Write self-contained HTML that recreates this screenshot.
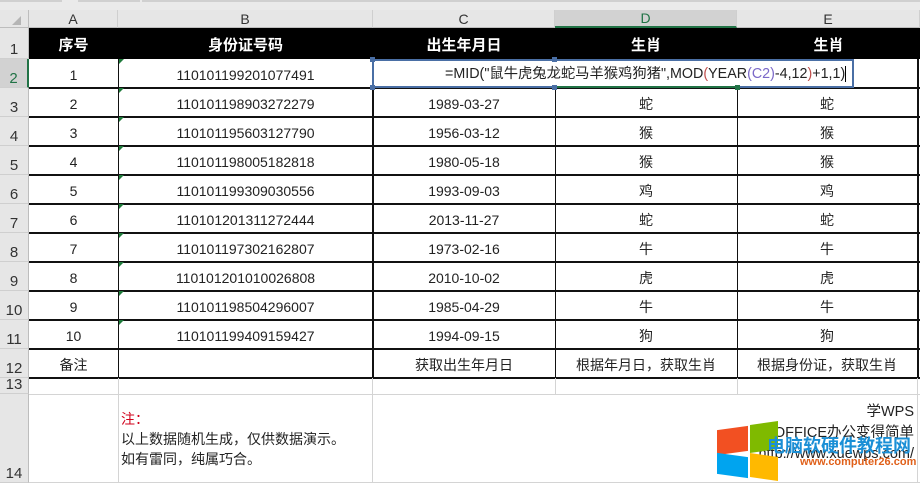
<!DOCTYPE html>
<html><head><meta charset="utf-8"><style>
*{margin:0;padding:0;box-sizing:border-box}
body{width:920px;height:483px;background:#fff;position:relative;overflow:hidden;font-family:"Liberation Sans","Noto Sans CJK SC",sans-serif;font-size:14px;color:#222}
.a{position:absolute}
.c{position:absolute;display:flex;align-items:center;justify-content:center;white-space:nowrap;padding-top:2px}
.rh{position:absolute;left:0;width:29px;background:#e6e6e6;border-bottom:1px solid #cfcfcf;border-right:1px solid #bdbdbd;font-size:15px;color:#333;display:flex;align-items:flex-end;justify-content:center;padding-bottom:0}
.ch{position:absolute;top:10px;height:18px;background:#e6e6e6;border-right:1px solid #cfcfcf;border-bottom:1px solid #bdbdbd;font-size:14px;color:#333;display:flex;align-items:center;justify-content:center}
.hl{position:absolute;height:1.5px;background:#111;left:29px}
.vl{position:absolute;width:1.5px;background:#111}
.tri{position:absolute;width:0;height:0;border-top:5px solid #1e7a3a;border-right:5px solid transparent}
</style></head><body>
<div class="a" style="left:0;top:0;width:920px;height:10px;background:#eaeaea"></div>
<div class="a" style="left:0;top:0;width:62px;height:2px;background:#d0d0d0"></div>
<div class="a" style="left:78px;top:0;width:62px;height:2px;background:#d0d0d0"></div>
<div class="a" style="left:142px;top:0;width:778px;height:2px;background:#d0d0d0"></div>
<div class="a" style="left:0;top:10px;width:29px;height:18px;background:#e6e6e6;border-right:1px solid #bdbdbd;border-bottom:1px solid #bdbdbd"></div>
<div class="a" style="left:12px;top:16px;width:0;height:0;border-left:9px solid transparent;border-bottom:9px solid #b5b5b5"></div>
<div class="ch" style="left:29px;width:89px">A</div>
<div class="ch" style="left:118px;width:255px">B</div>
<div class="ch" style="left:373px;width:182px">C</div>
<div class="ch" style="left:555px;width:182px;background:#d2d2d2;color:#217346;border-bottom:2px solid #217346">D</div>
<div class="ch" style="left:737px;width:183px">E</div>

<div class="rh" style="top:28px;height:31px">1</div>
<div class="rh" style="top:59px;height:29px;background:#d2d2d2;color:#217346;border-right:2px solid #217346">2</div>
<div class="rh" style="top:88px;height:29px">3</div>
<div class="rh" style="top:117px;height:29px">4</div>
<div class="rh" style="top:146px;height:29px">5</div>
<div class="rh" style="top:175px;height:29px">6</div>
<div class="rh" style="top:204px;height:29px">7</div>
<div class="rh" style="top:233px;height:29px">8</div>
<div class="rh" style="top:262px;height:29px">9</div>
<div class="rh" style="top:291px;height:29px">10</div>
<div class="rh" style="top:320px;height:29px">11</div>
<div class="rh" style="top:349px;height:29px">12</div>
<div class="rh" style="top:378px;height:16px;line-height:16px">13</div>
<div class="rh" style="top:394px;height:89px">14</div>

<div class="a" style="left:29px;top:28px;width:891px;height:31px;background:#000"></div>
<div class="c" style="left:29px;top:28px;width:89px;height:31px;color:#fff;font-weight:bold;font-size:15px">序号</div>
<div class="c" style="left:118px;top:28px;width:255px;height:31px;color:#fff;font-weight:bold;font-size:15px">身份证号码</div>
<div class="c" style="left:373px;top:28px;width:182px;height:31px;color:#fff;font-weight:bold;font-size:15px">出生年月日</div>
<div class="c" style="left:555px;top:28px;width:182px;height:31px;color:#fff;font-weight:bold;font-size:15px">生肖</div>
<div class="c" style="left:737px;top:28px;width:183px;height:31px;color:#fff;font-weight:bold;font-size:15px">生肖</div>

<div class="hl" style="top:87px;width:891px"></div>
<div class="hl" style="top:116px;width:891px"></div>
<div class="hl" style="top:145px;width:891px"></div>
<div class="hl" style="top:174px;width:891px"></div>
<div class="hl" style="top:203px;width:891px"></div>
<div class="hl" style="top:232px;width:891px"></div>
<div class="hl" style="top:261px;width:891px"></div>
<div class="hl" style="top:290px;width:891px"></div>
<div class="hl" style="top:319px;width:891px"></div>
<div class="hl" style="top:348px;width:891px"></div>
<div class="hl" style="top:377px;width:891px"></div>
<div class="a" style="left:29px;top:394px;width:891px;height:1px;background:#d4d4d4"></div>
<div class="a" style="left:29px;top:482px;width:891px;height:1px;background:#d4d4d4"></div>
<div class="vl" style="left:117.5px;top:59px;height:319px"></div>
<div class="vl" style="left:372px;top:59px;height:319px"></div>
<div class="vl" style="left:554.5px;top:59px;height:319px"></div>
<div class="vl" style="left:736.5px;top:59px;height:319px"></div>
<div class="vl" style="left:917px;top:59px;height:319px"></div>
<div class="a" style="left:118px;top:378px;width:1px;height:105px;background:#d4d4d4"></div>
<div class="a" style="left:372px;top:378px;width:1px;height:105px;background:#d4d4d4"></div>
<div class="a" style="left:555px;top:378px;width:1px;height:17px;background:#d4d4d4"></div>
<div class="a" style="left:737px;top:378px;width:1px;height:17px;background:#d4d4d4"></div>
<div class="a" style="left:917px;top:378px;width:1px;height:105px;background:#d4d4d4"></div>

<div class="tri" style="left:119px;top:59px"></div>
<div class="tri" style="left:119px;top:88px"></div>
<div class="tri" style="left:119px;top:117px"></div>
<div class="tri" style="left:119px;top:146px"></div>
<div class="tri" style="left:119px;top:175px"></div>
<div class="tri" style="left:119px;top:204px"></div>
<div class="tri" style="left:119px;top:233px"></div>
<div class="tri" style="left:119px;top:262px"></div>
<div class="tri" style="left:119px;top:291px"></div>
<div class="tri" style="left:119px;top:320px"></div>

<div class="c" style="left:29px;top:59px;width:89px;height:29px">1</div>
<div class="c" style="left:118px;top:59px;width:255px;height:29px">110101199201077491</div>
<div class="a" style="left:372px;top:59px;width:482px;height:29px;background:#fff;border:2px solid #4a6fa5"></div>
<div class="a" style="left:554px;top:86px;width:183px;height:2px;background:#217346"></div>
<div class="a" style="left:370px;top:57px;width:5px;height:5px;background:#4a6fa5"></div>
<div class="a" style="left:370px;top:85px;width:5px;height:5px;background:#4a6fa5"></div>
<div class="a" style="left:552px;top:57px;width:5px;height:5px;background:#4a6fa5"></div>
<div class="a" style="left:552px;top:85px;width:5px;height:5px;background:#4a6fa5"></div>
<div class="a" style="left:735px;top:85px;width:5px;height:5px;background:#217346"></div>
<div class="a" style="left:445px;top:64px;height:20px;line-height:20px;font-size:14.3px;white-space:nowrap;color:#222">=MID("鼠牛虎兔龙蛇马羊猴鸡狗猪",MOD<span style="color:#c0504d">(</span>YEAR<span style="color:#7b68c8">(C2)</span>-4,12<span style="color:#c0504d">)</span>+1,1)<span style="display:inline-block;width:1px;height:16px;background:#000;vertical-align:middle"></span></div>

<div class="c" style="left:29px;top:88px;width:89px;height:29px">2</div><div class="c" style="left:118px;top:88px;width:255px;height:29px">110101198903272279</div><div class="c" style="left:373px;top:88px;width:182px;height:29px">1989-03-27</div><div class="c" style="left:555px;top:88px;width:182px;height:29px">蛇</div><div class="c" style="left:737px;top:88px;width:180px;height:29px">蛇</div>
<div class="c" style="left:29px;top:117px;width:89px;height:29px">3</div><div class="c" style="left:118px;top:117px;width:255px;height:29px">110101195603127790</div><div class="c" style="left:373px;top:117px;width:182px;height:29px">1956-03-12</div><div class="c" style="left:555px;top:117px;width:182px;height:29px">猴</div><div class="c" style="left:737px;top:117px;width:180px;height:29px">猴</div>
<div class="c" style="left:29px;top:146px;width:89px;height:29px">4</div><div class="c" style="left:118px;top:146px;width:255px;height:29px">110101198005182818</div><div class="c" style="left:373px;top:146px;width:182px;height:29px">1980-05-18</div><div class="c" style="left:555px;top:146px;width:182px;height:29px">猴</div><div class="c" style="left:737px;top:146px;width:180px;height:29px">猴</div>
<div class="c" style="left:29px;top:175px;width:89px;height:29px">5</div><div class="c" style="left:118px;top:175px;width:255px;height:29px">110101199309030556</div><div class="c" style="left:373px;top:175px;width:182px;height:29px">1993-09-03</div><div class="c" style="left:555px;top:175px;width:182px;height:29px">鸡</div><div class="c" style="left:737px;top:175px;width:180px;height:29px">鸡</div>
<div class="c" style="left:29px;top:204px;width:89px;height:29px">6</div><div class="c" style="left:118px;top:204px;width:255px;height:29px">110101201311272444</div><div class="c" style="left:373px;top:204px;width:182px;height:29px">2013-11-27</div><div class="c" style="left:555px;top:204px;width:182px;height:29px">蛇</div><div class="c" style="left:737px;top:204px;width:180px;height:29px">蛇</div>
<div class="c" style="left:29px;top:233px;width:89px;height:29px">7</div><div class="c" style="left:118px;top:233px;width:255px;height:29px">110101197302162807</div><div class="c" style="left:373px;top:233px;width:182px;height:29px">1973-02-16</div><div class="c" style="left:555px;top:233px;width:182px;height:29px">牛</div><div class="c" style="left:737px;top:233px;width:180px;height:29px">牛</div>
<div class="c" style="left:29px;top:262px;width:89px;height:29px">8</div><div class="c" style="left:118px;top:262px;width:255px;height:29px">110101201010026808</div><div class="c" style="left:373px;top:262px;width:182px;height:29px">2010-10-02</div><div class="c" style="left:555px;top:262px;width:182px;height:29px">虎</div><div class="c" style="left:737px;top:262px;width:180px;height:29px">虎</div>
<div class="c" style="left:29px;top:291px;width:89px;height:29px">9</div><div class="c" style="left:118px;top:291px;width:255px;height:29px">110101198504296007</div><div class="c" style="left:373px;top:291px;width:182px;height:29px">1985-04-29</div><div class="c" style="left:555px;top:291px;width:182px;height:29px">牛</div><div class="c" style="left:737px;top:291px;width:180px;height:29px">牛</div>
<div class="c" style="left:29px;top:320px;width:89px;height:29px">10</div><div class="c" style="left:118px;top:320px;width:255px;height:29px">110101199409159427</div><div class="c" style="left:373px;top:320px;width:182px;height:29px">1994-09-15</div><div class="c" style="left:555px;top:320px;width:182px;height:29px">狗</div><div class="c" style="left:737px;top:320px;width:180px;height:29px">狗</div>
<div class="c" style="left:29px;top:349px;width:89px;height:29px">备注</div><div class="c" style="left:373px;top:349px;width:182px;height:29px">获取出生年月日</div><div class="c" style="left:555px;top:349px;width:182px;height:29px">根据年月日，获取生肖</div><div class="c" style="left:737px;top:349px;width:180px;height:29px">根据身份证，获取生肖</div>

<div class="a" style="left:121px;top:409px;line-height:20px;font-size:14px;white-space:nowrap"><span style="color:#d0021b">注：</span><br>以上数据随机生成，仅供数据演示。<br>如有雷同，纯属巧合。</div>
<div class="a" style="right:6px;top:402px;font-size:14.5px;text-align:right;line-height:21px;white-space:nowrap">学WPS<br>上OFFICE办公变得简单<br>http://www.xuewps.com/</div>
<div class="a" style="left:717px;top:428px;width:31px;height:25px;background:#f25022;transform:skewY(-8deg)"></div>
<div class="a" style="left:750px;top:423px;width:28px;height:28px;background:#7fba00;transform:skewY(-8deg)"></div>
<div class="a" style="left:717px;top:455px;width:31px;height:21px;background:#00a4ef;transform:skewY(8deg)"></div>
<div class="a" style="left:750px;top:455px;width:28px;height:24px;background:#ffb900;transform:skewY(8deg)"></div>
<div class="a" style="left:767px;top:432px;font-size:18px;font-weight:bold;color:#1a8fd6;white-space:nowrap">电脑软硬件教程网</div>
<div class="a" style="left:800px;top:456px;font-size:11px;font-weight:bold;color:#e0601a;white-space:nowrap">www.computer26.com</div>
</body></html>
